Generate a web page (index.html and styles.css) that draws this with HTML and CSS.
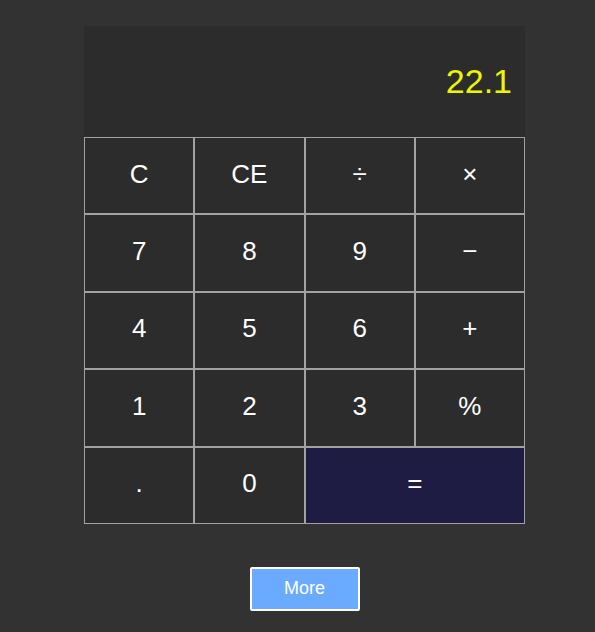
FILE: index.html
```html
<!DOCTYPE html>
<html>
<head>
<meta charset="utf-8">
<link rel="stylesheet" href="styles.css">
</head>
<body>
<div class="calc">
  <div class="display">22.1</div>
  <div class="keys">
    <button class="key">C</button>
    <button class="key">CE</button>
    <button class="key">÷</button>
    <button class="key">×</button>
    <button class="key">7</button>
    <button class="key">8</button>
    <button class="key">9</button>
    <button class="key">−</button>
    <button class="key">4</button>
    <button class="key">5</button>
    <button class="key">6</button>
    <button class="key">+</button>
    <button class="key">1</button>
    <button class="key">2</button>
    <button class="key">3</button>
    <button class="key">%</button>
    <button class="key">.</button>
    <button class="key">0</button>
    <button class="key equals">=</button>
  </div>
  <div class="more-row">
    <button class="more">More</button>
  </div>
</div>
</body>
</html>
```
FILE: styles.css
```css
html, body {
  margin: 0;
  padding: 0;
  background: #323232;
  font-family: "Liberation Sans", Arial, sans-serif;
}
.calc {
  width: 441px;
  margin-left: 84px;
  padding-top: 26px;
}
.display {
  height: 111px;
  box-sizing: border-box;
  background: #2c2c2c;
  color: #eef500;
  font-size: 34px;
  display: flex;
  align-items: center;
  justify-content: flex-end;
  padding: 0 13px 0 0;
}
.keys {
  display: grid;
  grid-template-columns: repeat(4, 1fr);
  grid-auto-rows: 77.4px;
}
.key {
  margin: 0;
  background: #2c2c2c;
  border: 1px solid #a2a2a2;
  color: #ffffff;
  font-family: "Liberation Sans", Arial, sans-serif;
  font-size: 26px;
  padding: 0 0 3px 0;
}
.equals {
  grid-column: span 2;
  background: #1e1c42;
}
.more-row {
  display: flex;
  justify-content: center;
  padding-top: 43px;
}
.more {
  width: 110px;
  height: 44px;
  background: #6aabff;
  border: 2px solid #ffffff;
  border-radius: 2px;
  color: #ffffff;
  font-family: "Liberation Sans", Arial, sans-serif;
  font-size: 18px;
  padding: 0;
}
```
